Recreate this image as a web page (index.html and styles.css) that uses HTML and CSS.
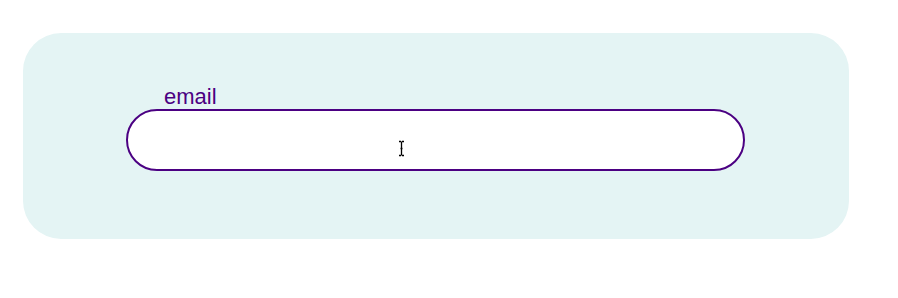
FILE: index.html
```html
<!DOCTYPE html>
<html>
<head>
<meta charset="utf-8">
<link rel="stylesheet" href="styles.css">
</head>
<body>
<div class="panel">
  <label class="label" for="email">email</label>
  <div class="field">
    <input id="email" class="input" type="text">
    <svg class="cursor" width="7" height="17" viewBox="0 0 7 17">
      <path d="M1 1.5h2M4 1.5h2M3.5 1.5v14M1 15.5h2M4 15.5h2M2.5 8.5h2" stroke="#000" stroke-width="1.3" fill="none"/>
    </svg>
  </div>
</div>
</body>
</html>
```
FILE: styles.css
```css
html, body {
  margin: 0;
  padding: 0;
  background: #ffffff;
}
body {
  font-family: "Liberation Sans", Arial, sans-serif;
  padding-top: 33px;
  padding-left: 23px;
}
.panel {
  box-sizing: border-box;
  width: 826px;
  height: 206px;
  background: #e4f4f4;
  border-radius: 38px;
  padding: 51px 104px 68px 103px;
  display: flex;
  flex-direction: column;
}
.label {
  display: block;
  font-size: 22px;
  line-height: 25px;
  height: 25px;
  color: #4b0082;
  padding-left: 38px;
}
.field {
  position: relative;
}
.input {
  display: block;
  box-sizing: border-box;
  width: 100%;
  height: 62px;
  border: 2px solid #4b0082;
  border-radius: 31px;
  background: #ffffff;
  outline: none;
  padding: 0 30px;
  font-size: 18px;
  font-family: "Liberation Sans", Arial, sans-serif;
}
.cursor {
  position: absolute;
  left: 272px;
  top: 31px;
}
```
